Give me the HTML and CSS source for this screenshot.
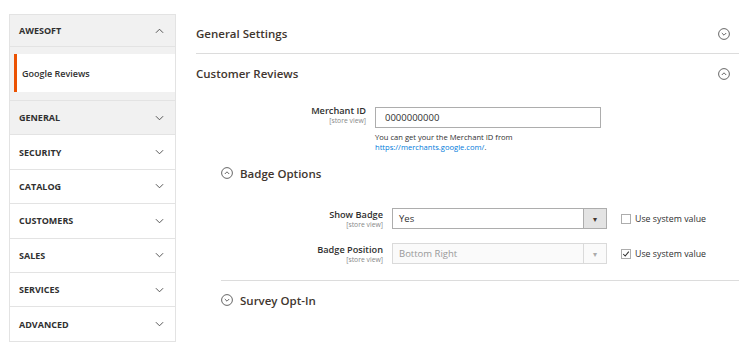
FILE: index.html
```html
<!DOCTYPE html>
<html lang="en">
<head>
  <meta charset="UTF-8">
  <title>Configuration - Google Reviews</title>
  <link rel="stylesheet" href="styles.css">
</head>
<body>
  <div class="page">
    <!-- Config tabs -->
    <nav class="side-nav">
      <div class="nav-block open">
        <div class="nav-title first">
          <span>AWESOFT</span>
          <svg class="chev" viewBox="0 0 10 6" width="9" height="6"><path d="M1 5 L5 1 L9 5" fill="none" stroke="#444" stroke-width="1"/></svg>
        </div>
        <ul class="nav-items">
          <li class="nav-item active">Google Reviews</li>
        </ul>
      </div>
      <div class="nav-title grey">
        <span>GENERAL</span>
        <svg class="chev" viewBox="0 0 10 6" width="9" height="6"><path d="M1 1 L5 5 L9 1" fill="none" stroke="#444" stroke-width="1"/></svg>
      </div>
      <div class="nav-title">
        <span>SECURITY</span>
        <svg class="chev" viewBox="0 0 10 6" width="9" height="6"><path d="M1 1 L5 5 L9 1" fill="none" stroke="#444" stroke-width="1"/></svg>
      </div>
      <div class="nav-title">
        <span>CATALOG</span>
        <svg class="chev" viewBox="0 0 10 6" width="9" height="6"><path d="M1 1 L5 5 L9 1" fill="none" stroke="#444" stroke-width="1"/></svg>
      </div>
      <div class="nav-title">
        <span>CUSTOMERS</span>
        <svg class="chev" viewBox="0 0 10 6" width="9" height="6"><path d="M1 1 L5 5 L9 1" fill="none" stroke="#444" stroke-width="1"/></svg>
      </div>
      <div class="nav-title">
        <span>SALES</span>
        <svg class="chev" viewBox="0 0 10 6" width="9" height="6"><path d="M1 1 L5 5 L9 1" fill="none" stroke="#444" stroke-width="1"/></svg>
      </div>
      <div class="nav-title">
        <span>SERVICES</span>
        <svg class="chev" viewBox="0 0 10 6" width="9" height="6"><path d="M1 1 L5 5 L9 1" fill="none" stroke="#444" stroke-width="1"/></svg>
      </div>
      <div class="nav-title">
        <span>ADVANCED</span>
        <svg class="chev" viewBox="0 0 10 6" width="9" height="6"><path d="M1 1 L5 5 L9 1" fill="none" stroke="#444" stroke-width="1"/></svg>
      </div>
    </nav>

    <!-- Config sections -->
    <main class="content">
      <div class="section-head bordered">
        <span>General Settings</span>
        <svg class="circle" viewBox="0 0 12 12" width="12" height="12"><circle cx="6" cy="6" r="5.4" fill="none" stroke="#555" stroke-width="0.9"/><path d="M3.8 5 L6 7.2 L8.2 5" fill="none" stroke="#555" stroke-width="0.9"/></svg>
      </div>
      <div class="section-head">
        <span>Customer Reviews</span>
        <svg class="circle" viewBox="0 0 12 12" width="12" height="12"><circle cx="6" cy="6" r="5.4" fill="none" stroke="#555" stroke-width="0.9"/><path d="M3.8 7 L6 4.8 L8.2 7" fill="none" stroke="#555" stroke-width="0.9"/></svg>
      </div>

      <div class="field merchant">
        <label class="field-label">Merchant ID<small>[store view]</small></label>
        <div class="field-control">
          <input class="text-input" type="text" value="0000000000">
          <p class="note">You can get your the Merchant ID from<br><a href="#">https://merchants.google.com/</a>.</p>
        </div>
      </div>

      <div class="group">
        <div class="group-head">
          <svg class="circle" viewBox="0 0 12 12" width="12" height="12"><circle cx="6" cy="6" r="5.4" fill="none" stroke="#555" stroke-width="0.9"/><path d="M3.8 7 L6 4.8 L8.2 7" fill="none" stroke="#555" stroke-width="0.9"/></svg>
          <span>Badge Options</span>
        </div>

        <div class="field sub">
          <label class="field-label">Show Badge<small>[store view]</small></label>
          <div class="select">
            <span>Yes</span>
            <span class="select-btn">&#9662;</span>
          </div>
          <label class="system"><span class="check"></span>Use system value</label>
        </div>

        <div class="field sub">
          <label class="field-label">Badge Position<small>[store view]</small></label>
          <div class="select disabled">
            <span>Bottom Right</span>
            <span class="select-btn">&#9662;</span>
          </div>
          <label class="system"><span class="check"><svg viewBox="0 0 10 10" width="8" height="8"><path d="M1.5 5 L4 7.5 L8.5 2" fill="none" stroke="#333" stroke-width="1.3"/></svg></span>Use system value</label>
        </div>

        <div class="group-head survey">
          <svg class="circle" viewBox="0 0 12 12" width="12" height="12"><circle cx="6" cy="6" r="5.4" fill="none" stroke="#555" stroke-width="0.9"/><path d="M3.8 5 L6 7.2 L8.2 5" fill="none" stroke="#555" stroke-width="0.9"/></svg>
          <span>Survey Opt-In</span>
        </div>
      </div>
    </main>
  </div>
</body>
</html>
```

FILE: styles.css
```css
body { margin: 0; font-family: "Open Sans", sans-serif; color: #303030; background: #fff; }
.page { display: flex; gap: 20px; padding: 14px 11px 0 9px; }

.side-nav { width: 167px; flex: none; border: 1px solid #e3e3e3; border-top: 0; box-sizing: border-box; }
.nav-block { background: #f1f1f1; }
.nav-title { display: flex; justify-content: space-between; align-items: center; height: 34.4px; box-sizing: border-box; padding: 0 11px 0 9px; border-top: 1px solid #e3e3e3; font-size: 9px; font-weight: 700; color: #303030; background: #fff; }
.nav-title.first { height: 32px; }
.nav-block .nav-title, .nav-title.grey { background: #f1f1f1; }
.nav-title .chev { flex: none; }
.nav-items { list-style: none; margin: 0; padding: 7px 0 8px; border-top: 1px solid #e3e3e3; }
.nav-item { height: 38px; display: flex; align-items: center; background: #fff; font-size: 9px; font-weight: 600; color: #303030; }
.nav-item.active { border-left: 3px solid #eb5202; padding-left: 5px; margin-left: 4px; }

.content { flex: 1; }
.section-head { display: flex; justify-content: space-between; align-items: center; height: 39px; font-size: 11.5px; font-weight: 600; color: #41362f; padding-right: 9px; }
.section-head.bordered { border-bottom: 1px solid #dcdcdc; }
.circle { flex: none; }

.field { display: flex; align-items: flex-start; }
.field-label { text-align: right; font-size: 9.2px; font-weight: 600; color: #303030; line-height: 10px; padding-top: 2px; }
.field-label small { display: block; font-size: 6.8px; font-weight: 400; color: #888; line-height: 9px; }
.merchant { margin-top: 11px; }
.merchant .field-label { width: 170px; margin-right: 9px; }
.text-input { width: 226px; height: 21px; box-sizing: border-box; border: 1px solid #adadad; padding: 0 9px; font-family: "Open Sans", sans-serif; font-size: 9.5px; color: #303030; margin: 0; }
.note { margin: 4px 0 0; font-size: 7.6px; line-height: 10px; color: #303030; }
.note a { color: #007bdb; text-decoration: none; }

.group { margin-left: 25px; margin-top: 10px; }
.group-head { display: flex; align-items: center; gap: 7px; height: 22px; font-size: 11.5px; font-weight: 600; color: #41362f; }
.group-head + .sub { margin-top: 24px; }
.sub + .sub { margin-top: 14px; }
.sub .field-label { width: 162px; margin-right: 9px; }
.select { display: flex; justify-content: space-between; align-items: center; width: 215px; height: 21px; box-sizing: border-box; border: 1px solid #adadad; font-size: 9.5px; color: #303030; padding-left: 6px; }
.select-btn { width: 22px; height: 100%; display: flex; justify-content: center; align-items: center; border-left: 1px solid #adadad; background: #e3e3e3; font-size: 8px; color: #41362f; }
.select.disabled { border-color: #dadada; color: #999; background: #fafafa; }
.select.disabled .select-btn { background: #fafafa; border-left-color: #dadada; color: #aaa; }
.system { display: flex; align-items: center; gap: 4px; margin-left: 14px; height: 21px; font-size: 8.8px; color: #303030; }
.check { width: 8px; height: 8px; border: 1px solid #adadad; background: #fff; display: flex; align-items: center; justify-content: center; }
.survey { margin-top: 16px; border-top: 1px solid #dcdcdc; height: 38px; }
```
